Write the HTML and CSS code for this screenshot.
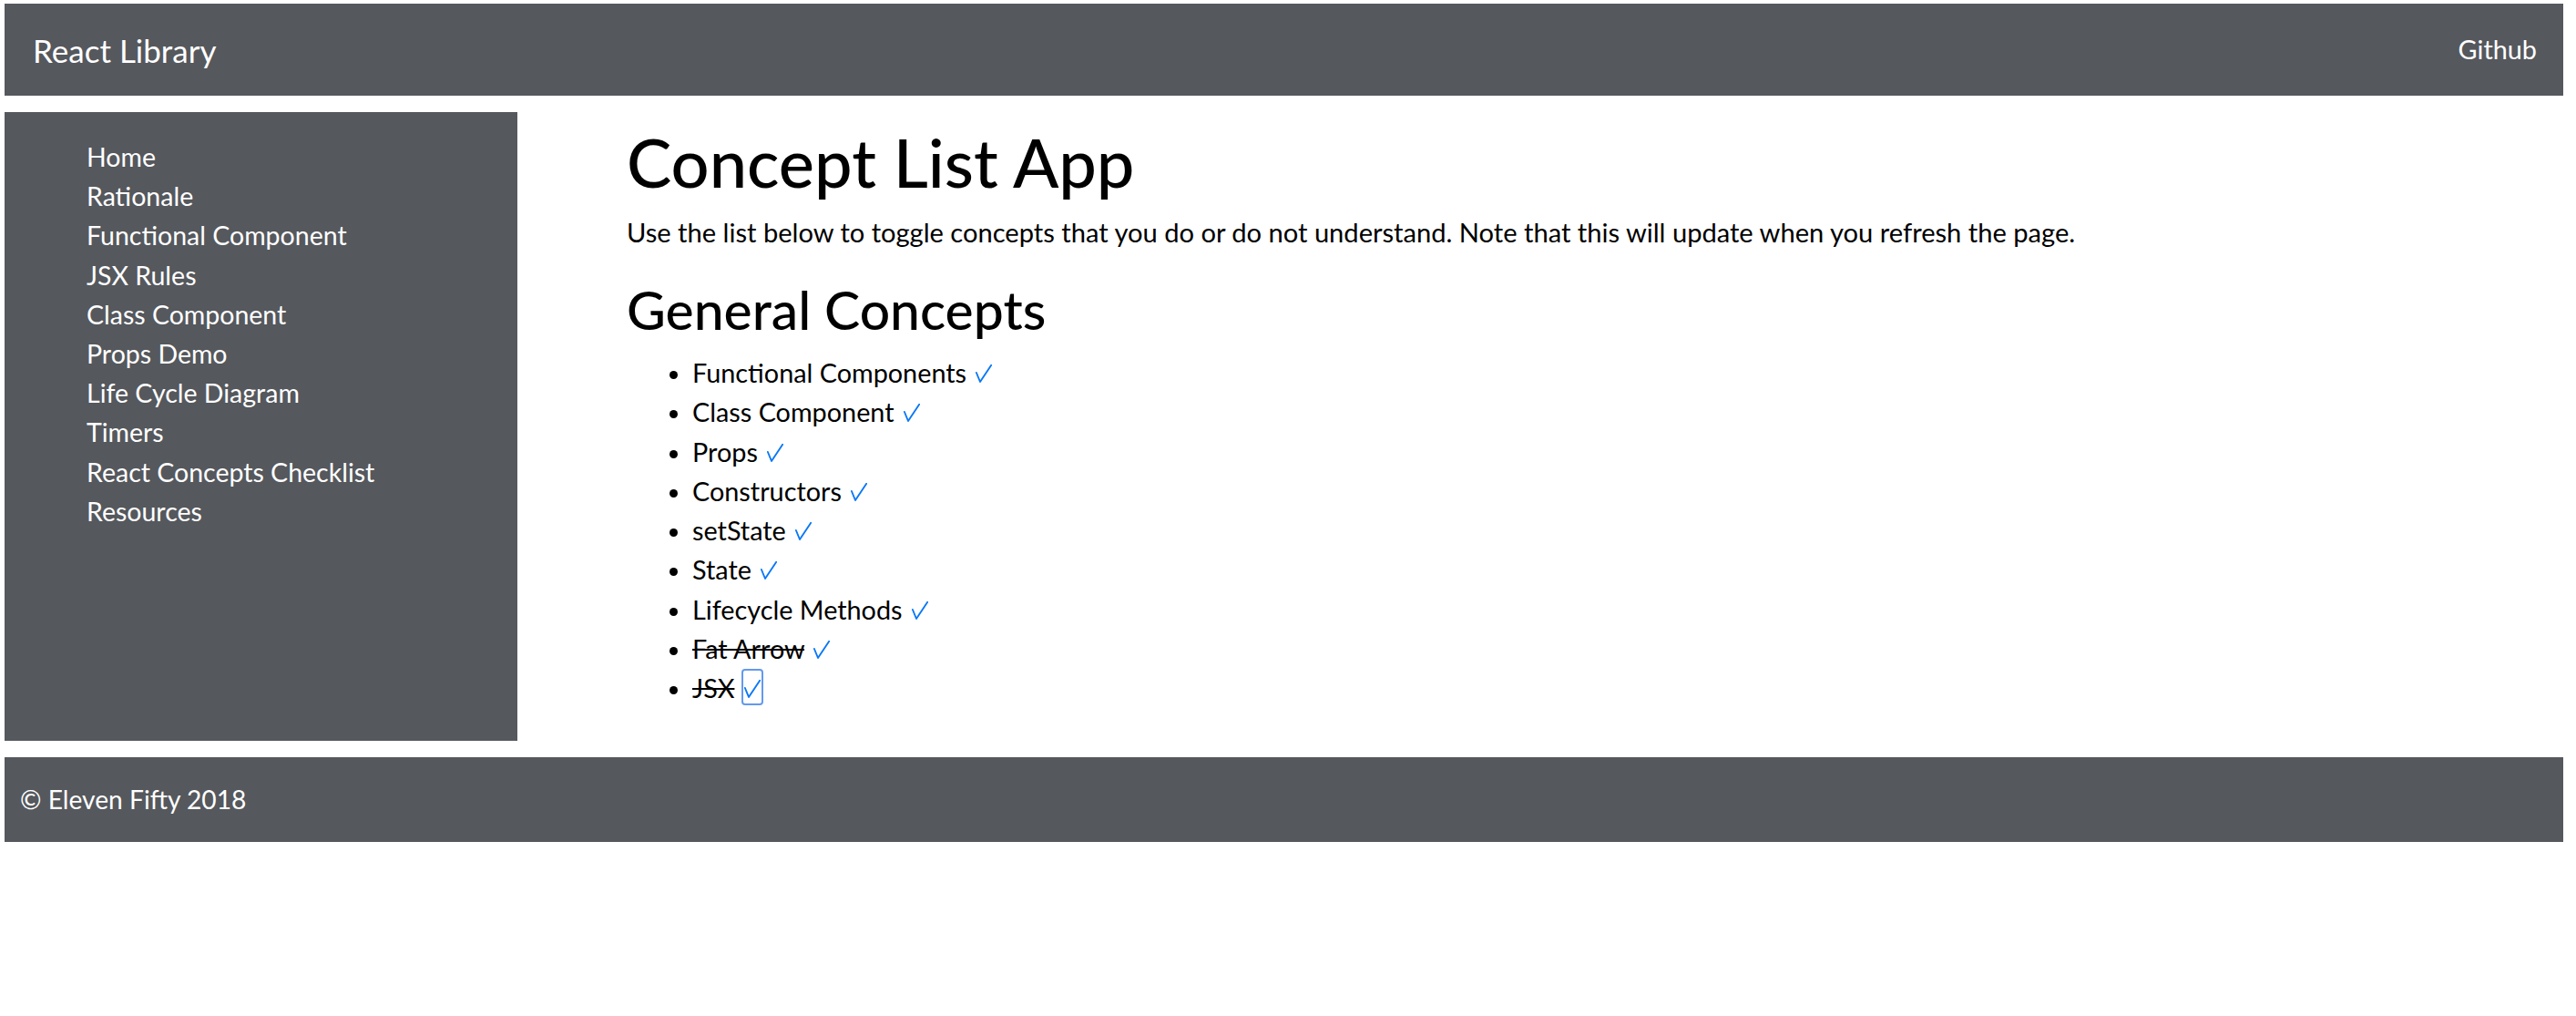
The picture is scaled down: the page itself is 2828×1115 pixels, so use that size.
FILE: index.html
```html
<!DOCTYPE html>
<html lang="en">
<head>
<meta charset="utf-8">
<title>React Library</title>
<link rel="stylesheet" href="styles.css">
</head>
<body>
<header class="navbar">
  <a class="brand" href="#">React Library</a>
  <a class="nav-link" href="#">Github</a>
</header>
<div class="layout">
  <aside class="sidebar">
    <ul class="side-list">
      <li><a href="#">Home</a></li>
      <li><a href="#">Rationale</a></li>
      <li><a href="#">Functional Component</a></li>
      <li><a href="#">JSX Rules</a></li>
      <li><a href="#">Class Component</a></li>
      <li><a href="#">Props Demo</a></li>
      <li><a href="#">Life Cycle Diagram</a></li>
      <li><a href="#">Timers</a></li>
      <li><a href="#">React Concepts Checklist</a></li>
      <li><a href="#">Resources</a></li>
    </ul>
  </aside>
  <main class="content">
    <h1 class="title">Concept List App</h1>
    <p class="intro">Use the list below to toggle concepts that you do or do not understand. Note that this will update when you refresh the page.</p>
    <h2 class="subtitle">General Concepts</h2>
    <ul class="concepts">
      <li><span>Functional Components</span> <button class="check" aria-label="toggle"><svg class="tick" viewBox="0 0 18 20"><polyline points="0.9,9 5,19 17.2,0.8"/></svg></button></li>
      <li><span>Class Component</span> <button class="check" aria-label="toggle"><svg class="tick" viewBox="0 0 18 20"><polyline points="0.9,9 5,19 17.2,0.8"/></svg></button></li>
      <li><span>Props</span> <button class="check" aria-label="toggle"><svg class="tick" viewBox="0 0 18 20"><polyline points="0.9,9 5,19 17.2,0.8"/></svg></button></li>
      <li><span>Constructors</span> <button class="check" aria-label="toggle"><svg class="tick" viewBox="0 0 18 20"><polyline points="0.9,9 5,19 17.2,0.8"/></svg></button></li>
      <li><span>setState</span> <button class="check" aria-label="toggle"><svg class="tick" viewBox="0 0 18 20"><polyline points="0.9,9 5,19 17.2,0.8"/></svg></button></li>
      <li><span>State</span> <button class="check" aria-label="toggle"><svg class="tick" viewBox="0 0 18 20"><polyline points="0.9,9 5,19 17.2,0.8"/></svg></button></li>
      <li><span>Lifecycle Methods</span> <button class="check" aria-label="toggle"><svg class="tick" viewBox="0 0 18 20"><polyline points="0.9,9 5,19 17.2,0.8"/></svg></button></li>
      <li><span class="done">Fat Arrow</span> <button class="check" aria-label="toggle"><svg class="tick" viewBox="0 0 18 20"><polyline points="0.9,9 5,19 17.2,0.8"/></svg></button></li>
      <li><span class="done">JSX</span> <button class="check focused" aria-label="toggle"><svg class="tick" viewBox="0 0 18 20"><polyline points="0.9,9 5,19 17.2,0.8"/></svg></button></li>
    </ul>
  </main>
</div>
<footer class="footer">© Eleven Fifty 2018</footer>
</body>
</html>
```

FILE: styles.css
```css
html, body {
  background: #fff;
}
body {
  margin: 4px 14px 0 5px;
  font-family: "Lato", "Open Sans", sans-serif;
  font-size: 28.8px;
  line-height: 43.2px;
  color: #000;
}
a {
  color: inherit;
  text-decoration: none;
}
.navbar {
  height: 101px;
  background: #55585d;
  display: flex;
  align-items: center;
  justify-content: space-between;
  padding: 0 29px 0 31px;
}
.brand {
  color: #fff;
  font-size: 35px;
  line-height: 54px;
}
.nav-link {
  color: #fff;
  font-size: 28.8px;
}
.layout {
  display: flex;
  align-items: stretch;
  margin-top: 18px;
}
.sidebar {
  width: 563px;
  flex: none;
  background: #55585d;
  padding: 28px 0 0 0;
}
.side-list {
  list-style: none;
  margin: 0;
  padding: 0 0 0 90px;
  font-size: 28.5px;
}
.side-list a {
  color: #fff;
}
.content {
  flex: 1;
  padding: 12px 0 7px 120px;
}
.title {
  margin: 0 0 11.4px;
  font-size: 74px;
  line-height: 86.4px;
  font-weight: 500;
}
.intro {
  margin: 0 0 28.8px;
  font-size: 29.1px;
}
.subtitle {
  margin: 0 0 14.4px;
  font-size: 58.8px;
  line-height: 69.1px;
  font-weight: 500;
}
.concepts {
  margin: 0 0 28.8px;
  padding-left: 72px;
}
.done {
  text-decoration: line-through;
}
.check {
  display: inline-flex;
  vertical-align: baseline;
  background: none;
  border: 2px solid transparent;
  border-radius: 4px;
  padding: 10px 1px 6px;
  margin: 0;
  line-height: 1;
  cursor: pointer;
}
.check.focused {
  border-color: #6399ee;
}
.tick {
  display: block;
  width: 18px;
  height: 20px;
  fill: none;
  stroke: #0a78f5;
  stroke-width: 1.9;
  stroke-linecap: round;
  stroke-linejoin: round;
}
.footer {
  margin-top: 18px;
  height: 93px;
  background: #55585d;
  color: #fff;
  display: flex;
  align-items: center;
  padding-left: 17px;
  font-size: 28.2px;
}
```
